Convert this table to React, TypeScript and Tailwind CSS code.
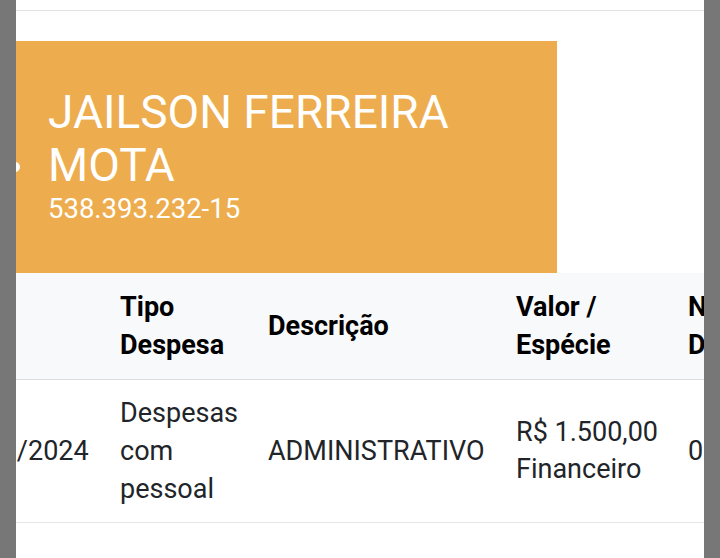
import React from 'react';

const columns = [
  { key: 'data', label: 'Data', width: 'w-[175px]' },
  { key: 'tipo', label: 'Tipo Despesa', width: 'w-[148px]' },
  { key: 'descricao', label: 'Descrição', width: 'w-[248px]' },
  { key: 'valor', label: 'Valor / Espécie', width: 'w-[172px]' },
  { key: 'doc', label: 'Nº Documento', width: 'w-[150px]' },
];

export default function App() {
  return (
    <div className="flex h-[558px] w-[720px] overflow-hidden bg-white font-['Roboto',sans-serif] text-[#212529]">
      <div className="w-4 shrink-0 bg-[#777777]" />

      <div className="relative min-w-0 flex-1 overflow-hidden">
        {/* end of previous block */}
        <div className="h-[11px] border-b border-[#e1e1e1]" />

        {/* Beneficiário card */}
        <div className="pt-[30px]">
          <div className="relative w-[541px] bg-[#edad4e] px-8 pt-[45px] pb-[48px] text-white">
            <span className="absolute -left-[6px] top-[121px] h-[10px] w-[10px] rounded-full bg-white" />
            <h2 className="text-[46px] leading-[53px] font-normal">JAILSON FERREIRA MOTA</h2>
            <p className="text-[27.5px] leading-[33px]">538.393.232-15</p>
          </div>
        </div>

        {/* Tabela de despesas (rolada horizontalmente) */}
        <div className="overflow-hidden">
          <table className="-ml-[87px] w-[893px] table-fixed border-collapse text-[27px] leading-[38px]">
            <thead>
              <tr className="border-b border-[#dcdcdc] bg-[#f8f9fa]">
                {columns.map((c) => (
                  <th key={c.key} className={`${c.width} px-4 py-[15px] text-left align-middle font-bold text-black`}>
                    {c.label}
                  </th>
                ))}
              </tr>
            </thead>
            <tbody>
              <tr className="border-b border-[#e6e6e6]">
                <td className="px-4 py-[14px] align-middle whitespace-nowrap">15/03/2024</td>
                <td className="px-4 py-[14px] align-middle">Despesas com pessoal</td>
                <td className="px-4 py-[14px] align-middle">ADMINISTRATIVO</td>
                <td className="px-4 py-[14px] align-middle leading-[37px] whitespace-nowrap">
                  R$ 1.500,00
                  <br />
                  Financeiro
                </td>
                <td className="px-4 py-[14px] align-middle">0001</td>
              </tr>
            </tbody>
          </table>
        </div>
      </div>

      <div className="w-4 shrink-0 bg-[#777777]" />
    </div>
  );
}
